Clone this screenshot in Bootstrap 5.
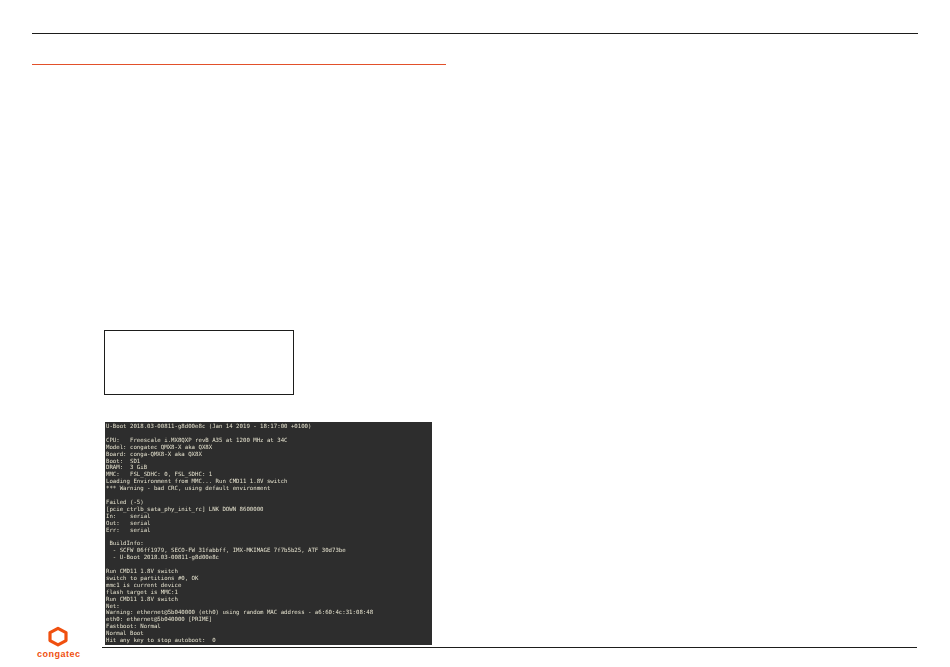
<!doctype html>
<html lang="en">
<head>
<meta charset="utf-8">
<title>U-Boot console</title>
<link href="https://cdn.jsdelivr.net/npm/bootstrap@5.3.0/dist/css/bootstrap.min.css" rel="stylesheet">
<style>
html, body { height: 667px; overflow: hidden; background: #fff; }
.sheet { padding: 33px 32px 0 32px; }
.rule-dark { border-top: 1px solid #1d1d1b; }
.rule-accent { border-top: 1px solid #e2502a; width: 414px; margin-top: 30px; }
.side-col { width: 70px; padding-left: 5px; }
.brand-word { font: 700 9px/1 "Liberation Sans", Arial, sans-serif; letter-spacing: .5px; color: #f0500f; margin-bottom: 1px; white-space: nowrap; }
.brand-mark { display: block; width: 22px; height: 22px; margin: 0 0 3px 10px; }
.main-col { width: 815px; padding-bottom: 12px; }
.empty-box { width: 190px; height: 65px; margin: 265px 0 0 2px; border: 1px solid #1d1d1b; }
.console { width: 327px; height: 223px; margin: 27px 0 2px 3px; padding: 1px 0 0 1px; background: #2d2d2d; color: #e6e3cf; overflow: hidden; }
.console pre { margin: 0; font: 5.7px/6.9px "DejaVu Sans Mono", "Liberation Mono", monospace; color: inherit; overflow: hidden; filter: blur(.25px); }
</style>
</head>
<body>
<div class="sheet">
  <div class="rule-dark"></div>
  <div class="rule-accent"></div>
  <div class="d-flex">
    <div class="side-col d-flex flex-column justify-content-end">
      <svg class="brand-mark" viewBox="0 0 22 22" aria-hidden="true"><polygon points="11,3.4 19,7.6 19,15.6 11,19.8 3,15.6 3,7.6" fill="none" stroke="#f0500f" stroke-width="3.2" stroke-linejoin="round"/></svg>
      <div class="brand-word">congatec</div>
    </div>
    <div class="main-col">
      <div class="empty-box"></div>
      <div class="console"><pre>U-Boot 2018.03-00811-g8d00e8c (Jan 14 2019 - 18:17:00 +0100)

CPU:   Freescale i.MX8QXP revB A35 at 1200 MHz at 34C
Model: congatec QMX8-X aka QX8X
Board: conga-QMX8-X aka QX8X
Boot:  SD1
DRAM:  3 GiB
MMC:   FSL_SDHC: 0, FSL_SDHC: 1
Loading Environment from MMC... Run CMD11 1.8V switch
*** Warning - bad CRC, using default environment

Failed (-5)
[pcie_ctrlb_sata_phy_init_rc] LNK DOWN 8600000
In:    serial
Out:   serial
Err:   serial

 BuildInfo:
  - SCFW 06ff1979, SECO-FW 31fabbff, IMX-MKIMAGE 7f7b5b25, ATF 30d73be
  - U-Boot 2018.03-00811-g8d00e8c

Run CMD11 1.8V switch
switch to partitions #0, OK
mmc1 is current device
flash target is MMC:1
Run CMD11 1.8V switch
Net:
Warning: ethernet@5b040000 (eth0) using random MAC address - a6:60:4c:31:08:48
eth0: ethernet@5b040000 [PRIME]
Fastboot: Normal
Normal Boot
Hit any key to stop autoboot:  0</pre></div>
      <div class="rule-dark"></div>
    </div>
  </div>
</div>
<script src="https://cdn.jsdelivr.net/npm/bootstrap@5.3.0/dist/js/bootstrap.bundle.min.js"></script>
</body>
</html>
